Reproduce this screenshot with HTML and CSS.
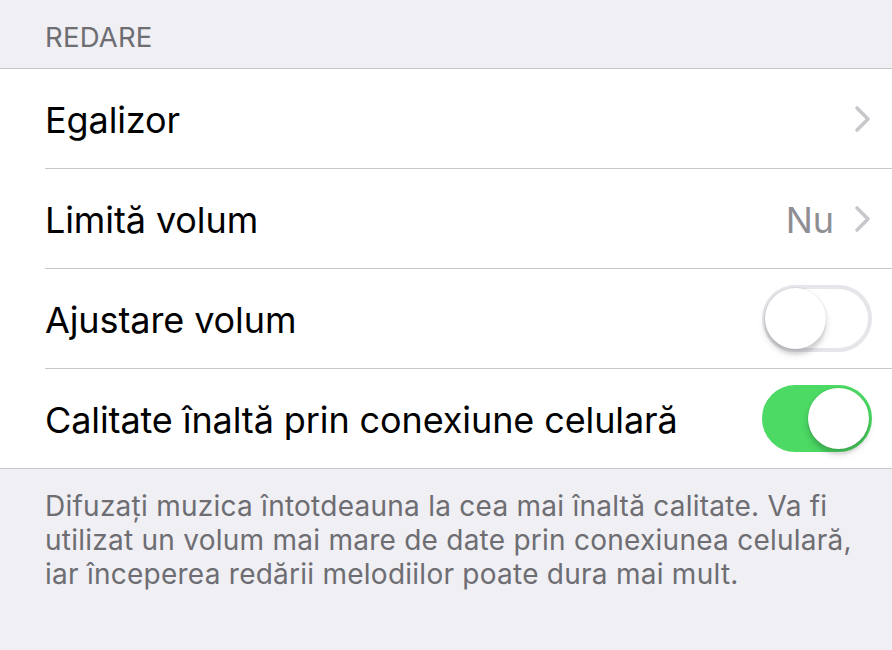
FILE: index.html
```html
<!DOCTYPE html>
<html lang="ro">
<head>
<meta charset="utf-8">
<link rel="stylesheet" href="styles.css">
</head>
<body>
<div class="page">
  <div class="section-header">REDARE</div>
  <div class="group">
    <div class="row">
      <div class="cell">
        <span class="label">Egalizor</span>
        <span class="accessory">
          <svg class="chevron" width="18" height="28" viewBox="0 0 18 28"><path d="M3 3 L14 14 L3 25" fill="none" stroke="#c7c7cc" stroke-width="3.6" stroke-linecap="round" stroke-linejoin="round"/></svg>
        </span>
      </div>
    </div>
    <div class="row">
      <div class="cell">
        <span class="label">Limită volum</span>
        <span class="accessory">
          <span class="value">Nu</span>
          <svg class="chevron" width="18" height="28" viewBox="0 0 18 28"><path d="M3 3 L14 14 L3 25" fill="none" stroke="#c7c7cc" stroke-width="3.6" stroke-linecap="round" stroke-linejoin="round"/></svg>
        </span>
      </div>
    </div>
    <div class="row">
      <div class="cell">
        <span class="label">Ajustare volum</span>
        <span class="switch"><span class="knob"></span></span>
      </div>
    </div>
    <div class="row">
      <div class="cell">
        <span class="label">Calitate înaltă prin conexiune celulară</span>
        <span class="switch on"><span class="knob"></span></span>
      </div>
    </div>
  </div>
  <div class="section-footer">Difuzați muzica întotdeauna la cea mai înaltă calitate. Va fi utilizat un volum mai mare de date prin conexiunea celulară, iar începerea redării melodiilor poate dura mai mult.</div>
</div>
</body>
</html>
```

FILE: styles.css
```css
html, body {
  margin: 0;
  padding: 0;
  background: #efeff4;
}
body {
  width: 892px;
  height: 650px;
  overflow: hidden;
  font-family: Inter, "Liberation Sans", sans-serif;
  -webkit-font-smoothing: antialiased;
}
.page {
  display: flex;
  flex-direction: column;
}
.section-header {
  height: 68px;
  box-sizing: border-box;
  padding: 21px 0 0 45px;
  font-size: 27.5px;
  line-height: 32px;
  color: #6d6d72;
  letter-spacing: 0.2px;
}
.group {
  background: #fff;
  border-top: 1px solid #c8c7cc;
  border-bottom: 1px solid #c8c7cc;
}
.row {
  padding-left: 45px;
}
.cell {
  height: 99px;
  display: flex;
  align-items: center;
  justify-content: space-between;
  padding-right: 20px;
  border-bottom: 1px solid #c8c7cc;
}
.row:last-child .cell {
  border-bottom: none;
}
.label {
  font-size: 36px;
  color: #000;
  letter-spacing: -0.1px;
  padding-top: 2px;
}
.accessory {
  display: flex;
  align-items: center;
  gap: 20px;
}
.value {
  font-size: 36px;
  color: #8e8e93;
  letter-spacing: -0.1px;
  padding-top: 2px;
}
.chevron {
  display: block;
}
.switch {
  position: relative;
  width: 110px;
  height: 67px;
  box-sizing: border-box;
  border-radius: 34px;
  border: 4px solid #e5e5ea;
  background: #fff;
}
.switch .knob {
  position: absolute;
  top: -1px;
  left: -1px;
  width: 61px;
  height: 61px;
  border-radius: 50%;
  background: #fff;
  box-shadow: 0 0 0 1px rgba(0,0,0,0.05), 0 5px 7px rgba(0,0,0,0.16), 0 6px 2px rgba(0,0,0,0.05);
}
.switch.on {
  border-color: #4cd964;
  background: #4cd964;
}
.switch.on .knob {
  left: auto;
  right: -1px;
}
.section-footer {
  padding: 20px 40px 0 45px;
  font-size: 28px;
  line-height: 34px;
  color: #6d6d72;
  letter-spacing: 0.25px;
}
```
